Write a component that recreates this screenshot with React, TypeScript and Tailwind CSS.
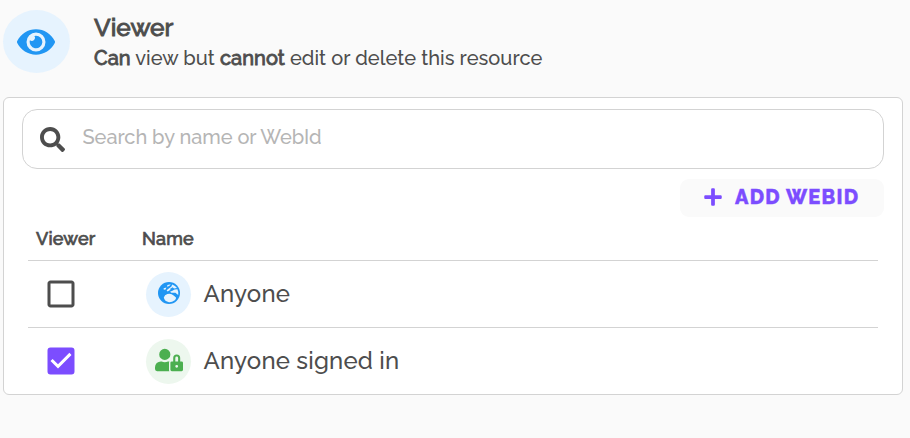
import type { ReactNode } from "react";
import { FaEye, FaPlus, FaSearch, FaUserLock } from "react-icons/fa";
import { MdCheckBox, MdCheckBoxOutlineBlank } from "react-icons/md";

function Globe() {
  return (
    <svg viewBox="0 0 22 22" className="mb-[3px] size-[22px]">
      <circle cx="11" cy="11" r="11" fill="#2196f3" />
      <g fill="#e6f3fe">
        <path d="M9.4 3L12.8 2.2L11.2 4L9 4.8ZM5.6 6.2L8.4 5.6L7.6 7.4L5.8 7.8Z" />
        <path d="M14.2 2.4Q17.4 3.4 19 6L16 6.4L14.6 5.2L12 7L12.6 7.8L9.6 9.4L8.6 8.2L13.4 4.4Z" />
        <path d="M19.4 7.2Q20.6 9.4 20.2 13L17.4 10.8L13.4 10.8L12 9.8L14.4 8.8L16.6 7.6Z" />
        <path d="M5.8 15.6Q6.6 12.6 9.4 12Q13.2 11 15.6 13.6L18 15.4Q18.2 17 16.8 18.2Q13.8 20.4 11 20.2Q6.6 19.6 5.8 15.6Z" />
      </g>
    </svg>
  );
}

function Row({ checked, icon, label, tint }: { checked?: boolean; icon: ReactNode; label: string; tint: string }) {
  return (
    <div className="flex h-[67px] items-center border-t border-[#d3d3d3]">
      <div className="ml-[15px] w-[103px]">
        {checked ? (
          <MdCheckBox className="size-9 text-[#7c4dff]" />
        ) : (
          <MdCheckBoxOutlineBlank className="size-9 text-[#4d4d4d]" />
        )}
      </div>
      <div className={`flex size-[45px] items-center justify-center rounded-full ${tint}`}>{icon}</div>
      <span className="ml-[12.5px] text-[24px] leading-[30px] tracking-[0.18px]">{label}</span>
    </div>
  );
}

export default function App() {
  return (
    <main className="h-[438px] bg-[#fafafa] pl-[3px] font-['Raleway','Lato',sans-serif] font-medium text-[#4d4d4d]">
      <header className="flex h-[97px] pt-2.5">
        <div className="flex h-[63px] w-[67px] items-center justify-center rounded-[50%] bg-[#e6f3fe]">
          <FaEye className="mr-0.5 size-[38px] text-[#2196f3]" />
        </div>
        <div className="ml-6">
          <h1 className="mt-[3px] text-[24.5px] leading-[30px] font-medium [-webkit-text-stroke:0.9px_#4d4d4d]">Viewer</h1>
          <p className="mt-px text-[20px] leading-[28px] tracking-[0.04px]">
            <span className="[-webkit-text-stroke:0.8px_#4d4d4d]">Can</span> view but{" "}
            <span className="[-webkit-text-stroke:0.8px_#4d4d4d]">cannot</span> edit or delete this resource
          </p>
        </div>
      </header>
      <section className="h-[298px] w-[900px] rounded-[6px] border border-[#d3d3d3] bg-white pt-[11px] pr-[18px] pl-[18px]">
        <div className="flex h-[60px] items-center rounded-[15px] border border-[#d3d3d3] pl-[17px]">
          <FaSearch className="size-[25px]" />
          <input
            placeholder="Search by name or WebId"
            className="ml-[17.5px] w-[500px] pb-1 text-[20px] tracking-[-0.06px] outline-none placeholder:text-[#b5b5b5]"
          />
        </div>
        <div className="mt-2.5 flex justify-end">
          <button className="flex h-[38px] w-[204px] items-center rounded-[9px] bg-[#fafafa] pb-[3px] pl-[23px] text-[#7c4dff]">
            <FaPlus className="size-5" />
            <span className="ml-3 text-[20px] font-extrabold tracking-[1.25px] [-webkit-text-stroke:0.4px_#7c4dff]">
              ADD WEBID
            </span>
          </button>
        </div>
        <div className="mx-1.5">
          <div className="flex h-[43px] pt-[9px] text-[18px] leading-[26px] tracking-[0.2px] [-webkit-text-stroke:0.7px_#4d4d4d]">
            <span className="ml-2 w-[106px]">Viewer</span>
            <span>Name</span>
          </div>
          <Row icon={<Globe />} label="Anyone" tint="bg-[#e6f3fe]" />
          <Row
            checked
            icon={<FaUserLock className="mb-0.5 size-7 text-[#4caf50]" />}
            label="Anyone signed in"
            tint="bg-[#edf7ee]"
          />
        </div>
      </section>
    </main>
  );
}
